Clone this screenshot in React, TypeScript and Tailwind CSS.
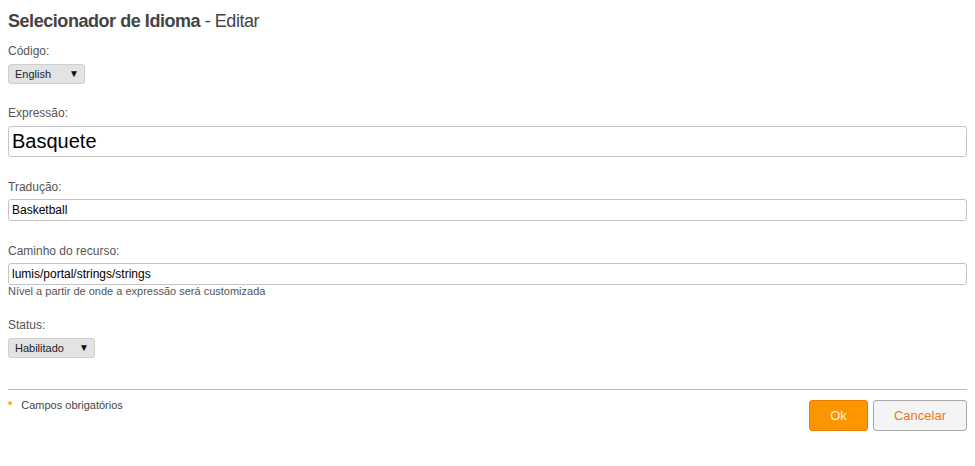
import React from "react";

function Label({ children, className = "" }: { children: React.ReactNode; className?: string }) {
  return <div className={`text-[12px] leading-[14px] text-[#555] ${className}`}>{children}</div>;
}

function Select({ value, width }: { value: string; width: string }) {
  return (
    <div
      className={`relative mt-[6px] flex h-[20px] ${width} items-center rounded-[3px] border border-[#cfcfcf] bg-[#e3e3e3] pl-[6px] text-[11px] text-[#222]`}
    >
      <span>{value}</span>
      <span className="absolute right-[5px] top-[2px] text-[10px] leading-[14px] text-[#111]">▼</span>
    </div>
  );
}

export default function App() {
  return (
    <div className="min-h-[466px] bg-white px-[8px] font-['Liberation_Sans',Arial,sans-serif]">
      <h1 className="pt-[10px] text-[18px] leading-[22px] tracking-[-0.45px] text-[#444]">
        <span className="font-bold">Selecionador de Idioma</span>
        <span className="font-normal"> - Editar</span>
      </h1>

      <Label className="mt-[12px]">Código:</Label>
      <Select value="English" width="w-[77px]" />

      <Label className="mt-[22px]">Expressão:</Label>
      <div className="mt-[6px] flex h-[31px] items-center rounded-[3px] border border-[#c4c4c4] px-[3px] pb-[2px] text-[20px] text-black">
        Basquete
      </div>

      <Label className="mt-[23px]">Tradução:</Label>
      <div className="mt-[5px] flex h-[22px] items-center rounded-[3px] border border-[#c4c4c4] px-[3px] text-[12px] text-black">
        Basketball
      </div>

      <Label className="mt-[23px]">Caminho do recurso:</Label>
      <div className="mt-[5px] flex h-[22px] items-center rounded-[3px] border border-[#c4c4c4] px-[3px] text-[12px] text-black">
        lumis/portal/strings/strings
      </div>
      <div className="text-[11px] leading-[13px] text-[#555]">Nível a partir de onde a expressão será customizada</div>

      <Label className="mt-[20px]">Status:</Label>
      <Select value="Habilitado" width="w-[87px]" />

      <div className="mt-[31px] h-px bg-[#bcbcbc]" />

      <div className="flex items-start justify-between">
        <div className="mt-[9px] flex items-center text-[11px] leading-[13px] text-[#444]">
          <span className="mr-[9px] text-[11px] font-bold leading-[11px] text-[#f39c00]">*</span>
          <span>Campos obrigatórios</span>
        </div>
        <div className="mt-[10px] flex gap-[5px]">
          <button className="h-[31px] w-[59px] rounded-[3px] border border-[#e77f00] bg-[#fc9600] text-[13px] text-[#fff4e6]">
            Ok
          </button>
          <button className="h-[31px] w-[94px] rounded-[3px] border border-[#aaaaaa] bg-[#f4f4f4] text-[13px] text-[#f27424]">
            Cancelar
          </button>
        </div>
      </div>
    </div>
  );
}
